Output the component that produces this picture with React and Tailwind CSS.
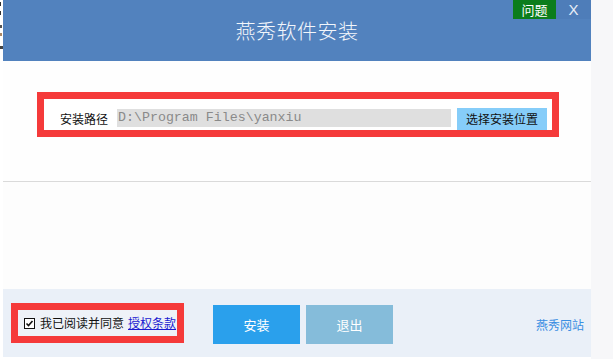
import React from "react";

const cjk = { fontFamily: '"Noto Sans CJK SC", "Noto Sans", sans-serif' };

export default function App() {
  return (
    <div className="flex w-[613px] h-[359px] bg-white overflow-hidden" style={cjk}>
      {/* left strip: background window fragments */}
      <div className="w-[3px] flex flex-col bg-white">
        <div className="h-[2px]" />
        <div className="h-[4px] w-[1px] bg-[#333]" />
        <div className="h-[5px]" />
        <div className="h-[4px] w-[1px] bg-[#333]" />
        <div className="h-[10px]" />
        <div className="h-[3px] w-[2px] bg-[#555]" />
        <div className="h-[5px]" />
        <div className="h-[3px] w-[2px] bg-[#a86]" />
        <div className="h-[10px]" />
        <div className="h-[3px] w-[3px] bg-[#444]" />
      </div>

      {/* main window */}
      <div className="w-[588px] flex flex-col">
        {/* header */}
        <div className="relative h-[61px] bg-[#5282be] flex items-center justify-center">
          <span className="text-[20px] text-[#f2f6fb] leading-none tracking-[0.5px] font-light">燕秀软件安装</span>
          <div className="absolute right-0 top-0 flex h-[19px]">
            <div className="w-[43px] bg-[#0b7d1c] flex items-center justify-center text-[13px] text-white leading-none">问题</div>
            <div className="w-[35px] bg-[#4e7db9] flex items-center justify-center text-[15px] text-[#e8eef7] leading-none font-light" style={{ fontFamily: '"Liberation Sans", sans-serif' }}>X</div>
          </div>
        </div>

        {/* body top */}
        <div className="h-[120px] bg-[#fefefe] pt-[31px] pl-[34px]">
          <div className="w-[522px] h-[45px] border-[7px] border-[#f53a3a] flex items-end pl-[16px] pr-[5px] bg-white">
            <span className="text-[12px] text-[#111] leading-none mb-[5px] mr-[9px]">安装路径</span>
            <div className="w-[334px] h-[18px] bg-[#dfdfdf] flex items-center pl-[1px] mb-[3px] text-[13.3px] text-[#8a8a8a] leading-none" style={{ fontFamily: '"Liberation Mono", monospace' }}>
              D:\Program Files\yanxiu
            </div>
            <div className="ml-[6px] w-[90px] h-[22px] bg-[#86cdf9] flex items-center justify-center text-[12px] text-[#111] leading-none">选择安装位置</div>
          </div>
        </div>
        <div className="h-[1px] bg-[#dadada]" />
        <div className="h-[107px] bg-[#fdfdfd]" />

        {/* footer */}
        <div className="h-[68px] bg-[#eaf0f8] flex items-start">
          <div className="ml-[8px] mt-[14px] w-[173px] h-[40px] border-[7px] border-[#f53a3a] bg-[#eef2f8] flex items-center pl-[6px]">
            <svg width="11" height="11" viewBox="0 0 11 11" className="shrink-0">
              <rect x="0.5" y="0.5" width="10" height="10" fill="#fff" stroke="#111" />
              <path d="M2.5 5.5 L4.5 7.5 L8.5 3" fill="none" stroke="#111" strokeWidth="1.6" />
            </svg>
            <span className="ml-[5px] text-[12px] text-[#111] leading-none whitespace-nowrap">我已阅读并同意</span>
            <span className="ml-[4px] text-[12px] text-[#1a1ad0] underline leading-none whitespace-nowrap">授权条款</span>
          </div>
          <div className="ml-[29px] mt-[16px] w-[87px] h-[39px] bg-[#2aa0ec] flex items-center justify-center text-[13px] text-white leading-none">安装</div>
          <div className="ml-[6px] mt-[16px] w-[87px] h-[39px] bg-[#85bcda] flex items-center justify-center text-[13px] text-white leading-none">退出</div>
          <div className="ml-[143px] mt-[30px] text-[12px] text-[#3a8ee2] leading-none whitespace-nowrap">燕秀网站</div>
        </div>
        <div className="h-[2px] bg-white" />
      </div>

      {/* right strip */}
      <div className="w-[22px] bg-[#f7f7f9]" />
    </div>
  );
}
